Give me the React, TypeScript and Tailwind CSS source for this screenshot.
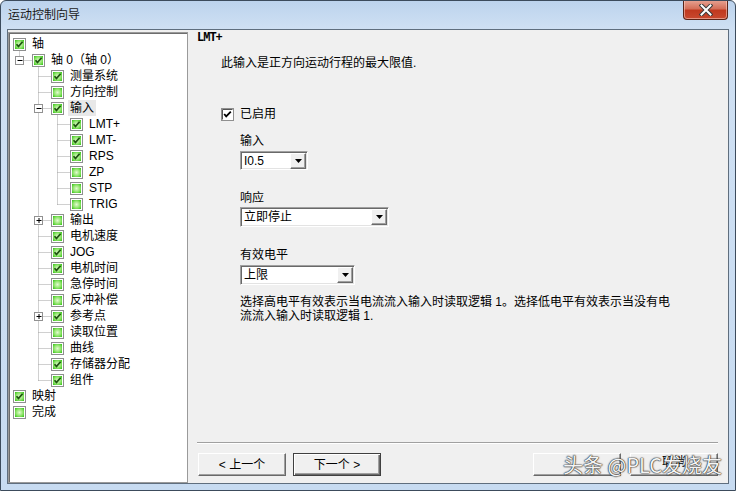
import React from "react";

type Node = { t: string; l: number; c: boolean; exp?: "-" | "+"; sel?: boolean };

const tree: Node[] = [
  { t: "轴", l: 0, c: true },
  { t: "轴 0（轴 0）", l: 1, c: true, exp: "-" },
  { t: "测量系统", l: 2, c: true },
  { t: "方向控制", l: 2, c: false },
  { t: "输入", l: 2, c: true, exp: "-", sel: true },
  { t: "LMT+", l: 3, c: true },
  { t: "LMT-", l: 3, c: true },
  { t: "RPS", l: 3, c: true },
  { t: "ZP", l: 3, c: false },
  { t: "STP", l: 3, c: false },
  { t: "TRIG", l: 3, c: false },
  { t: "输出", l: 2, c: false, exp: "+" },
  { t: "电机速度", l: 2, c: true },
  { t: "JOG", l: 2, c: true },
  { t: "电机时间", l: 2, c: true },
  { t: "急停时间", l: 2, c: false },
  { t: "反冲补偿", l: 2, c: false },
  { t: "参考点", l: 2, c: true, exp: "+" },
  { t: "读取位置", l: 2, c: false },
  { t: "曲线", l: 2, c: false },
  { t: "存储器分配", l: 2, c: true },
  { t: "组件", l: 2, c: true },
  { t: "映射", l: 0, c: true },
  { t: "完成", l: 0, c: false },
];

const indent = ["pl-[4px]", "pl-[23px]", "pl-[42px]", "pl-[61px]"];

const cx = (l: number) => 10.5 + 19 * l;
const cy = (i: number) => 11.5 + 16 * i;

function GreenBox({ checked }: { checked: boolean }) {
  return (
    <svg width="13" height="13" viewBox="0 0 13 13" className="shrink-0">
      <defs>
        <radialGradient id="gb" cx="50%" cy="50%" r="70%">
          <stop offset="0%" stopColor="#e2fbd0" />
          <stop offset="55%" stopColor="#8ee46a" />
          <stop offset="100%" stopColor="#2fbf12" />
        </radialGradient>
      </defs>
      <rect x="0.5" y="0.5" width="12" height="12" fill="#fff" stroke="#8e8f8f" />
      <rect x="2" y="2" width="9" height="9" fill="url(#gb)" />
      {checked && <path d="M3.5 6.2 L5.5 8.4 L9.6 3.8" fill="none" stroke="#1f5410" strokeWidth="1.7" />}
    </svg>
  );
}

function TreeLines() {
  const els: React.ReactNode[] = [];
  const dot = { stroke: "#a0a0a0", strokeDasharray: "1 1" };
  tree.forEach((n, i) => {
    if (n.l === 0) return;
    const x0 = n.exp ? cx(n.l - 1) + 4 : cx(n.l - 1);
    els.push(<line key={"h" + i} x1={x0} y1={cy(i)} x2={4 + 19 * n.l} y2={cy(i)} {...dot} />);
  });
  tree.forEach((n, p) => {
    let last = -1;
    for (let j = p + 1; j < tree.length; j++) {
      if (tree[j].l <= n.l) break;
      if (tree[j].l === n.l + 1) last = j;
    }
    if (last > 0) {
      els.push(<line key={"v" + p} x1={cx(n.l)} y1={cy(p) + 7} x2={cx(n.l)} y2={cy(last)} {...dot} />);
    }
  });
  tree.forEach((n, i) => {
    if (!n.exp) return;
    const x = cx(n.l - 1);
    const y = cy(i);
    els.push(
      <g key={"e" + i}>
        <rect x={x - 4} y={y - 4} width="8" height="8" fill="#fff" stroke="#919191" />
        <line x1={x - 2} y1={y} x2={x + 3} y2={y} stroke="#000" />
        {n.exp === "+" && <line x1={x + 0.5} y1={y - 2.5} x2={x + 0.5} y2={y + 2.5} stroke="#000" />}
      </g>
    );
  });
  return (
    <svg className="absolute left-0 top-0 pointer-events-none" width="178" height="400">
      {els}
    </svg>
  );
}

function ClassicCheck() {
  return (
    <svg width="13" height="13" viewBox="0 0 13 13">
      <rect x="0.5" y="0.5" width="12" height="12" fill="#fff" stroke="#8f8f8f" />
      <path d="M1.5 11.5 V1.5 H11.5" fill="none" stroke="#555" />
      <path d="M3.2 6 L5.2 8.4 L9.8 3.6" fill="none" stroke="#000" strokeWidth="1.8" />
    </svg>
  );
}

function Select({ w, value }: { w: string; value: string }) {
  return (
    <div
      className={`${w} flex items-center justify-between bg-white border border-t-[#a0a0a0] border-l-[#a0a0a0] border-b-white border-r-white shadow-[inset_1px_1px_0_#696969,inset_-1px_-1px_0_#e3e3e3] pl-[2px] pr-[1px]`}
    >
      <span className="leading-[14px] pl-[1px]">{value}</span>
      <div className="w-[16px] h-[16px] flex items-center justify-center bg-[#f0f0f0] border border-t-white border-l-white border-r-[#696969] border-b-[#696969] shadow-[inset_-1px_-1px_0_#a0a0a0]">
        <svg width="7" height="4" viewBox="0 0 7 4">
          <path d="M0 0 H7 L3.5 4 Z" fill="#000" />
        </svg>
      </div>
    </div>
  );
}

export default function App() {
  return (
    <div className="relative w-[736px] h-[491px] overflow-hidden rounded-t-[6px] border border-[#3c4b5c] bg-[linear-gradient(180deg,#bcd3ed_0px,#cfe0f3_28px,#c7dbf1_100%)] font-['Liberation_Sans','Noto_Sans_CJK_SC',sans-serif] text-[12px] text-black">
      {/* title bar */}
      <div className="relative h-[28px] flex items-center pl-[7px]">
        <span className="text-[12px] leading-[14px] text-[#1a1a1a]">运动控制向导</span>
        <div className="absolute right-[7px] top-[-1px] w-[45px] h-[20px] rounded-b-[4px] border border-t-0 border-[#5a2418] bg-[linear-gradient(180deg,#e8a595_0%,#d5705a_45%,#c0391f_55%,#c8492f_100%)] flex items-center justify-center shadow-[inset_0_0_0_1px_rgba(255,220,210,0.5)]">
          <svg width="14" height="12" viewBox="0 0 14 12">
            <path d="M2.5 1.5 L11.5 10.5 M11.5 1.5 L2.5 10.5" stroke="#3a3a3a" strokeWidth="4" strokeLinecap="square" />
            <path d="M2.5 1.5 L11.5 10.5 M11.5 1.5 L2.5 10.5" stroke="#fff" strokeWidth="2" strokeLinecap="square" />
          </svg>
        </div>
      </div>

      {/* client */}
      <div className="mx-[6px] h-[455px] border border-[#5f6e7e] bg-[#f0f0f0] flex">
        {/* tree */}
        <div className="relative mt-[2px] w-[180px] h-[451px] bg-white border border-[#9a9a9a] shadow-[inset_1px_1px_0_#6d6d6d] pt-[3px]">
          <TreeLines />
          {tree.map((n, i) => (
            <div key={i} className={`${indent[n.l]} relative h-[16px] flex items-start gap-[4px]`}>
              <div className="mt-[2px]">
                <GreenBox checked={n.c} />
              </div>
              <span className={`px-[2px] leading-[16px] whitespace-nowrap ${n.sel ? "bg-[#e8e8e8]" : ""}`}>{n.t}</span>
            </div>
          ))}
        </div>

        {/* right pane */}
        <div className="flex-1 flex flex-col pl-[9px] pr-[10px] pb-[7px]">
          <div className="mt-[1px] leading-[14px] font-bold font-['Liberation_Mono',monospace] tracking-[-1px]">LMT+</div>
          <div className="mt-[11px] ml-[24px] leading-[14px]">此输入是正方向运动行程的最大限值.</div>
          <div className="mt-[37px] ml-[24px] h-[14px] flex items-center gap-[6px]">
            <ClassicCheck />
            <span className="leading-[14px]">已启用</span>
          </div>
          <div className="ml-[43px] flex flex-col items-start">
            <div className="mt-[13px] leading-[14px]">输入</div>
            <div className="mt-[3px]">
              <Select w="w-[68px] h-[19px]" value="I0.5" />
            </div>
            <div className="mt-[21px] leading-[14px]">响应</div>
            <div className="mt-[2px]">
              <Select w="w-[149px] h-[20px]" value="立即停止" />
            </div>
            <div className="mt-[21px] leading-[14px]">有效电平</div>
            <div className="mt-[3px]">
              <Select w="w-[115px] h-[20px]" value="上限" />
            </div>
            <p className="mt-[10px] leading-[14px] whitespace-nowrap">
              选择高电平有效表示当电流流入输入时读取逻辑 1。选择低电平有效表示当没有电
              <br />
              流流入输入时读取逻辑 1.
            </p>
          </div>

          <div className="mt-auto border-t border-t-[#a0a0a0] border-b border-b-white" />
          <div className="mt-[9px] flex pl-[1px] gap-[7px]">
            <button className="w-[88px] h-[23px] bg-[#f0f0f0] border border-t-white border-l-white border-r-[#696969] border-b-[#696969] shadow-[inset_-1px_-1px_0_#a0a0a0] leading-[14px]">
              &lt; 上一个
            </button>
            <button className="w-[88px] h-[23px] bg-[#f0f0f0] border border-[#404040] shadow-[inset_1px_1px_0_#fff,inset_-1px_-1px_0_#696969,inset_-2px_-2px_0_#a0a0a0] leading-[14px]">
              下一个 &gt;
            </button>
            <button className="ml-auto w-[88px] h-[23px] bg-[#f0f0f0] border border-t-white border-l-white border-r-[#696969] border-b-[#696969] shadow-[inset_-1px_-1px_0_#a0a0a0]" />
            <button className="ml-[2px] w-[88px] h-[23px] bg-[#f0f0f0] border border-t-white border-l-white border-r-[#696969] border-b-[#696969] shadow-[inset_-1px_-1px_0_#a0a0a0] leading-[14px] pb-[6px]">
              取消
            </button>
          </div>
        </div>
      </div>

      {/* watermark */}
      <div className="absolute left-[562px] top-[452px] text-[20px] leading-[24px] whitespace-nowrap text-[#f4f4f4] font-['Noto_Sans_CJK_SC',sans-serif] [text-shadow:0_0_1px_#222,0_0_1px_#222,0_0_2px_#444]">
        头条 @PLC发烧友
      </div>
    </div>
  );
}
